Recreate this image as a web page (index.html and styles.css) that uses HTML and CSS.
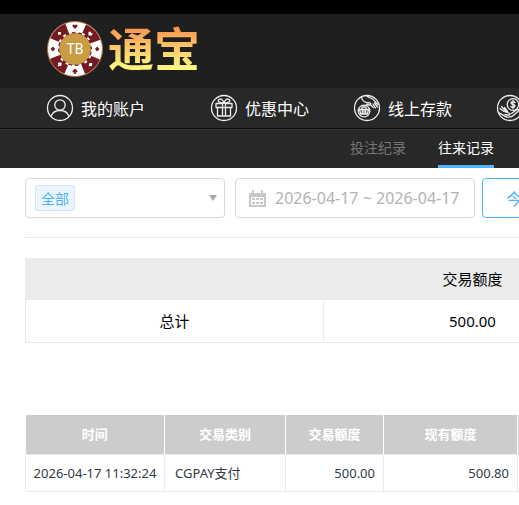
FILE: index.html
```html
<!DOCTYPE html>
<html lang="zh-CN">
<head>
    <meta charset="UTF-8">
    <meta name="viewport" content="width=device-width, initial-scale=1.0">
    <title>往来记录</title>
    <link rel="stylesheet" href="styles.css">
</head>
<body>
    <header class="header">
        <a class="logo" href="#">
            <svg class="chip" viewBox="0 0 56 56" aria-hidden="true">
                <circle cx="28" cy="28" r="27.5" fill="#fff" stroke="#b5713f"/>
                <circle cx="28" cy="28" r="21.5" fill="none" stroke="#741a20" stroke-width="11" stroke-dasharray="16.89 16.88" stroke-dashoffset="-8.44"/>
                <circle cx="28" cy="28" r="17" fill="#741a20"/>
                <circle cx="28" cy="28" r="16.8" fill="none" stroke="#fff" stroke-width="2" stroke-dasharray="3 3.6"/>
                <circle cx="28" cy="28" r="15.8" fill="#c99b42"/>
                <g fill="#741a20">
                    <path d="M28 8l-2.400-2.600c-.8-2 1.800-2.800 2.400-1 .6-1.800 3.200-1 2.400 1z"/>
                    <path d="M28 47.500l2.300 2.300c.7 1.500-.8 2-1.600 1.400L29 53h-2l.3-1.800c-.8.6-2.300.1-1.600-1.400z"/>
                    <path d="M6 25.500l2 2.500-2 2.500-2.500-2.500z"/>
                    <path d="M50 25.500l2.500 2.500-2.500 2.500-2-2.500z"/>
                </g>
                <g fill="#fff" transform="rotate(45 28 28)">
                    <path d="M28 9l-2.200-2.200c-.8-2 1.600-2.800 2.200-1 .6-1.800 3-1 2.200 1z"/>
                    <path d="M28 47l2 2c.7 1.500-.8 2-1.400 1.400L29 52h-2l.4-1.600c-.6.6-2.100.1-1.400-1.400z"/>
                    <path d="M6 26l2 2-2 2-2-2z"/>
                    <path d="M50 25.500l2 2.500-2 2.500-2-2.500z"/>
                </g>
                <text x="28" y="33" text-anchor="middle" class="chip-text">TB</text>
            </svg>
            <span class="logo-text">通宝</span>
        </a>
    </header>
    <nav class="nav">
        <a class="nav-item nav-account" href="#">
            <svg class="nav-icon" viewBox="0 0 28 28" aria-hidden="true">
                <circle cx="14" cy="14" r="12.500"/>
                <circle cx="14" cy="11" r="5.200"/>
                <path d="M5 22.500c1.200-3.800 4.500-6 9-6s7.800 2.200 9 6"/>
            </svg>
            <span>我的账户</span>
        </a>
        <a class="nav-item" href="#">
            <svg class="nav-icon" viewBox="0 0 28 28" aria-hidden="true">
                <circle cx="14" cy="14" r="12.500"/>
                <path d="M6 9.500h16v4H6zM7.500 13.500h13V22h-13zM12.500 9.500V22M15.500 9.500V22"/>
                <path d="M13.500 9C9 9 7 7 9 5.500s4 .5 5 3.500c1-3 3-5 5-3.500S19 9 14.500 9"/>
            </svg>
            <span>优惠中心</span>
        </a>
        <a class="nav-item" href="#">
            <svg class="nav-icon" viewBox="0 0 28 28" aria-hidden="true">
                <circle cx="14" cy="14" r="12.500"/>
                <circle cx="11" cy="17" r="5.800"/>
                <path d="M6.500 15.500h9l-1.200 4.500H7.700zM9.300 16v3.500M11 16v3.500M12.700 16v3.500M8.500 15l1-2h3l1 2"/>
                <path d="M8.500 3c.5 3 2.500 5 5 5.500l3.500.5c1.500.5 1 2.300-.5 2l-3-.5M14 2c2 2 6 2 8 5.500l3 3M17.500 11l3 2.500M20 10l2.500 4M21.500 9l3 4"/>
            </svg>
            <span>线上存款</span>
        </a>
        <a class="nav-item" href="#" aria-label="额度转换">
            <svg class="nav-icon" viewBox="0 0 28 28" aria-hidden="true">
                <circle cx="14" cy="14" r="12.500"/>
                <circle cx="17" cy="10.500" r="5.800"/>
                <path d="M19 8.500c-.8-1-4-1.200-4 .6 0 1.900 4 .9 4 2.900 0 1.900-3.400 1.700-4.200.4M17 6.500v8"/>
                <path d="M3 19c3 .5 4.500 3.500 8 4 3 .3 5.500-.5 7-2l4.500-4c1-1.500-.5-2-2-1l-5 3.500M4 14.500l4 3 5 1.500c1.500.5 1 2.300-.5 2l-3.500-.5M5.500 12.500l4.500 5M8.500 13.500l3 4"/>
            </svg>
        </a>
    </nav>
    <div class="subnav">
        <a href="#">投注纪录</a>
        <a class="active" href="#">往来记录</a>
    </div>
    <main class="main">
        <form class="filter">
            <div class="box select-box">
                <select class="type" aria-label="交易类别">
                    <option>全部</option>
                </select>
            </div>
            <div class="box date-box">
                <svg class="calendar" viewBox="0 0 17 17" aria-hidden="true">
                    <path d="M0 3h3V0h2v3h7V0h2v3h3v14H0z"/>
                    <path fill="#fff" d="M2 7h13v8H2z"/>
                    <path d="M3 8h3v2H3zM7 8h3v2H7zM11 8h3v2h-3zM3 12h3v2H3zM7 12h3v2H7zM11 12h3v2h-3z"/>
                </svg>
                <input class="date" type="text" value="2026-04-17 ~ 2026-04-17" aria-label="时间" readonly>
            </div>
            <button class="today" type="button">今日</button>
        </form>
        <table class="total">
            <thead>
                <tr>
                    <td></td>
                    <th>交易额度</th>
                </tr>
            </thead>
            <tbody>
                <tr>
                    <td>总计</td>
                    <td>500.00</td>
                </tr>
            </tbody>
        </table>
        <table class="record">
            <colgroup>
                <col class="col-time">
                <col class="col-type">
                <col class="col-amount">
                <col class="col-balance">
                <col>
            </colgroup>
            <thead>
                <tr>
                    <th>时间</th>
                    <th>交易类别</th>
                    <th>交易额度</th>
                    <th>现有额度</th>
                    <td></td>
                </tr>
            </thead>
            <tbody>
                <tr>
                    <td class="time">2026-04-17 11:32:24</td>
                    <td>CGPAY支付</td>
                    <td class="num">500.00</td>
                    <td class="num">500.80</td>
                    <td></td>
                </tr>
            </tbody>
        </table>
    </main>
</body>
</html>
```
FILE: styles.css
```css
*{
    box-sizing: border-box;
}
html{
    overflow-x: hidden;
}
body{
    margin: 0;
    min-width: 647px;
    background-color: #fff;
    color: #000;
    font-family: "Noto Sans", "Noto Sans CJK SC", sans-serif;
    font-size: 16px;
    overflow: hidden;
}
a{
    color: #fff;
    text-decoration: none;
}
.header{
    height: 88px;
    padding: 0 47px;
    border-top: 14px solid #000;
    background-color: #1f1f1f;
}
.logo{
    display: flex;
    align-items: center;
    gap: 5px;
    height: 70px;
}
.chip{
    width: 56px;
    height: 56px;
}
.chip-text{
    fill: #fff;
    font-family: Roboto, sans-serif;
    font-size: 14px;
}
.logo-text{
    padding-bottom: 6px;
    font-family: "Noto Sans CJK SC", sans-serif;
    font-size: 46px;
    font-weight: 700;
    line-height: 56px;
    color: transparent;
    background-image: linear-gradient(#f9934f 15%, #fccb6a 50%, #fbf580 80%);
    -webkit-background-clip: text;
    background-clip: text;
}
.nav{
    display: flex;
    height: 41px;
    padding-left: 46px;
    gap: 44px;
    background-color: #282828;
    border-bottom: 1px solid #0c0c0c;
}
.nav-item{
    display: flex;
    align-items: center;
    gap: 7px;
    white-space: nowrap;
}
.nav-account{
    margin-right: 21px;
}
.nav-icon{
    width: 28px;
    height: 28px;
    fill: none;
    stroke: #eee;
    stroke-width: 1.3;
    stroke-linecap: round;
    stroke-linejoin: round;
}
.subnav{
    display: flex;
    gap: 32px;
    height: 39px;
    padding-left: 350px;
    background-color: #282828;
    border-top: 1px solid #333;
}
.subnav a{
    font-size: 14px;
    line-height: 36px;
    color: #777;
}
.subnav .active{
    color: #fff;
    border-bottom: 3px solid #4db5ff;
}
.main{
    padding: 10px 25px 13px;
}
.filter{
    display: flex;
    padding-bottom: 19px;
    border-bottom: 1px solid #e6e6e6;
}
.box{
    display: flex;
    align-items: center;
    height: 40px;
    border: 1px solid #d9d9d9;
    border-radius: 4px;
}
.select-box{
    width: 200px;
    padding: 0 7px 0 9px;
    margin-right: 10px;
    justify-content: space-between;
}
.select-box::after{
    content: "";
    border: 4px solid transparent;
    border-top: 6px solid #a9a9a9;
    border-bottom: 0;
}
.type{
    appearance: none;
    height: 26px;
    padding: 0 5px;
    border: 1px solid #d3e5fd;
    border-radius: 2px;
    background-color: #ecf4ff;
    color: #4db5ff;
    font-family: inherit;
    font-size: 14px;
}
.date-box{
    width: 240px;
    padding: 0 10px 0 13px;
    margin-right: 7px;
    gap: 9px;
}
.calendar{
    flex: none;
    width: 17px;
    height: 17px;
    fill: #c8c8c8;
}
.date{
    width: 100%;
    padding: 0;
    border: 0;
    outline: 0;
    color: #b4b4b4;
    font-family: inherit;
    font-size: 16px;
}
.today{
    height: 40px;
    padding: 0 23px;
    border: 1px solid #4db5ff;
    border-radius: 4px;
    background-color: #fff;
    color: #4db5ff;
    font-family: inherit;
    font-size: 16px;
}
table{
    width: 100%;
    table-layout: fixed;
    border-collapse: collapse;
}
th, td{
    padding: 0;
}
.total{
    margin-top: 20px;
    font-size: 15px;
    line-height: 22px;
    text-align: center;
}
.total th, .total td{
    height: 43px;
    font-weight: 400;
    border: 1px solid #ebebeb;
}
.total thead th, .total thead td{
    height: 41px;
    background-color: #ebebeb;
}
.record{
    margin-top: 72px;
    font-size: 13px;
    line-height: 20px;
}
.col-time{
    width: 139px;
}
.col-type{
    width: 121px;
}
.col-amount{
    width: 98px;
}
.col-balance{
    width: 134px;
}
.record thead th, .record thead td{
    height: 39px;
    background-color: #ccc;
    color: #fff;
    border-right: 1px solid #fff;
}
.record tbody td{
    height: 37px;
    padding: 0 8px 0 10px;
    color: #333a45;
    border: 1px solid #ebebeb;
    white-space: nowrap;
}
.record .time{
    padding: 0;
    text-align: center;
}
.record .num{
    text-align: right;
}
```
